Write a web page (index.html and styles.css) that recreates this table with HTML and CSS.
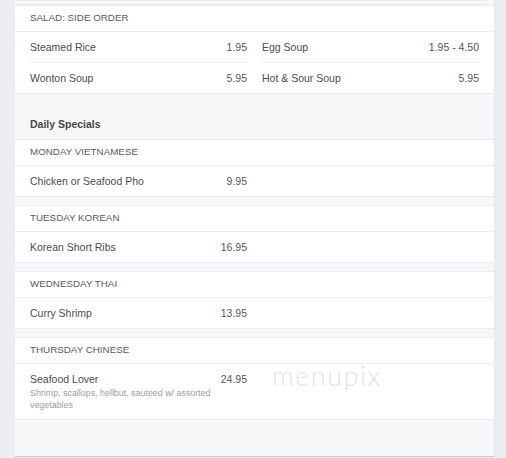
FILE: index.html
```html
<!DOCTYPE html>
<html>
<head>
<meta charset="utf-8">
<link rel="stylesheet" href="styles.css">
</head>
<body>
<div class="menu">
  <div class="prev-edge"></div>
  <section class="card">
    <div class="card-head">SALAD: SIDE ORDER</div>
    <div class="grid">
      <div class="item sep"><span class="name">Steamed Rice</span><span class="price">1.95</span></div>
      <div class="item sep"><span class="name">Egg Soup</span><span class="price">1.95 - 4.50</span></div>
      <div class="item"><span class="name">Wonton Soup</span><span class="price">5.95</span></div>
      <div class="item"><span class="name">Hot &amp; Sour Soup</span><span class="price">5.95</span></div>
    </div>
  </section>

  <h2 class="section-title">Daily Specials</h2>

  <section class="card">
    <div class="card-head">MONDAY VIETNAMESE</div>
    <div class="grid">
      <div class="item"><span class="name">Chicken or Seafood Pho</span><span class="price">9.95</span></div>
    </div>
  </section>

  <section class="card">
    <div class="card-head">TUESDAY KOREAN</div>
    <div class="grid">
      <div class="item"><span class="name">Korean Short Ribs</span><span class="price">16.95</span></div>
    </div>
  </section>

  <section class="card">
    <div class="card-head">WEDNESDAY THAI</div>
    <div class="grid">
      <div class="item"><span class="name">Curry Shrimp</span><span class="price">13.95</span></div>
    </div>
  </section>

  <section class="card card-mark">
    <div class="card-head">THURSDAY CHINESE</div>
    <div class="grid">
      <div class="item item-desc">
        <div class="line"><span class="name">Seafood Lover</span><span class="price">24.95</span></div>
        <div class="desc">Shrimp, scallops, hellbut, sauteed w/ assorted vegetables</div>
      </div>
    </div>
    <span class="watermark">menupix</span>
  </section>
</div>
</body>
</html>
```

FILE: styles.css
```css
* { box-sizing: border-box; }
html, body {
  margin: 0;
  padding: 0;
  background: #ededf2;
  font-family: "Liberation Sans", Arial, sans-serif;
  color: #444;
}
.menu {
  margin-left: 15px;
  width: 480px;
  height: 457px;
  background: #f7f7fa;
  border-bottom: 1px solid #c9c9cf;
  border-right: 1px solid #e4e4ea;
  overflow: hidden;
}
.prev-edge {
  height: 5px;
  border-top: 1px solid #ececf0;
  border-bottom: 1px solid #ececf0;
  margin: 0 7px 0 0;
  background: #f9f9fb;
}
.card {
  background: #fff;
  border-top: 1px solid #ececf0;
  border-bottom: 1px solid #ececf0;
  margin-bottom: 8px;
}
.card-mark { position: relative; }
.card-head {
  font-size: 9.8px;
  line-height: 14px;
  padding: 5px 15px 6px;
  color: #5a5a5a;
  border-bottom: 1px solid #ececf0;
}
.grid {
  display: grid;
  grid-template-columns: 1fr 1fr;
  column-gap: 15px;
  padding: 0 15px;
}
.item {
  display: flex;
  justify-content: space-between;
  padding: 8px 0;
  font-size: 10.5px;
  line-height: 14px;
  color: #4c4c4c;
}
.item.sep { border-bottom: 1px solid #ececf0; }
.price { color: #555; }
.item-desc { display: block; }
.line {
  display: flex;
  justify-content: space-between;
}
.desc {
  font-size: 8.9px;
  line-height: 12px;
  color: #9d9d9d;
  padding-top: 1px;
}
.section-title {
  margin: 0;
  font-size: 10.5px;
  font-weight: bold;
  line-height: 14px;
  color: #474747;
  padding: 15px 15px 8px;
}
.watermark {
  position: absolute;
  left: 257px;
  top: 25px;
  font-family: "Lato", "Open Sans", sans-serif;
  font-weight: 300;
  font-size: 27px;
  line-height: 26px;
  letter-spacing: 1.5px;
  color: #e3e3e5;
}
```
